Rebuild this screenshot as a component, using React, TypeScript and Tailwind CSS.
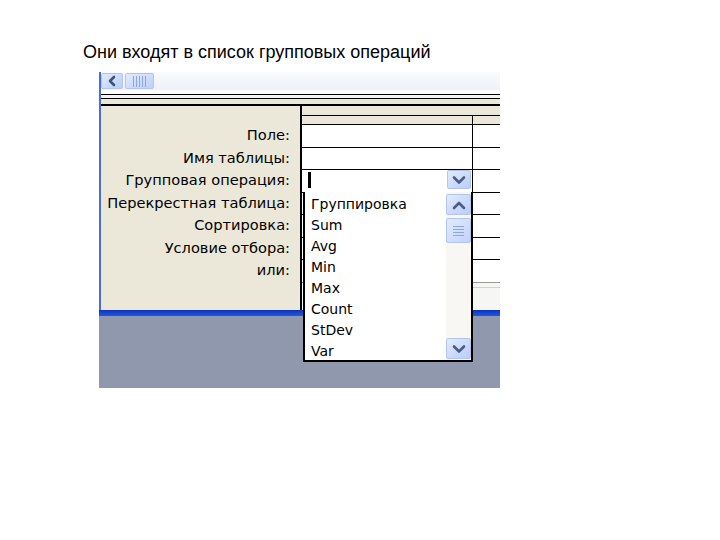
import React from "react";

const labels = [
  "Поле:",
  "Имя таблицы:",
  "Групповая операция:",
  "Перекрестная таблица:",
  "Сортировка:",
  "Условие отбора:",
  "или:",
];

const options = ["Группировка", "Sum", "Avg", "Min", "Max", "Count", "StDev", "Var"];

function Chevron({ up = false }: { up?: boolean }) {
  return (
    <svg width="14" height="10" viewBox="0 0 14 10">
      <path
        d={up ? "M2 8 L7 3 L12 8" : "M2 2.5 L7 7.5 L12 2.5"}
        fill="none"
        stroke="#4a5d86"
        strokeWidth="2.6"
        strokeLinecap="round"
        strokeLinejoin="round"
      />
    </svg>
  );
}

function ScrollButton({ up = false, className = "" }: { up?: boolean; className?: string }) {
  return (
    <div
      className={
        "flex items-center justify-center rounded-[2px] border border-[#b3c5ee] bg-gradient-to-br from-[#e2eafe] to-[#b9cdf8] " +
        className
      }
    >
      <Chevron up={up} />
    </div>
  );
}

export default function App() {
  return (
    <div className="w-[720px] h-[540px] bg-white font-['DejaVu_Sans',sans-serif] text-black">
      <div className="pt-[41px] pl-[83px] leading-[22px] text-[18px] font-['Liberation_Sans',Arial,sans-serif]">
        Они входят в список групповых операций
      </div>

      <div className="relative ml-[99px] mt-[9px] w-[401px] h-[316px] flex flex-col">
        {/* horizontal scrollbar */}
        <div className="h-[18px] flex items-stretch gap-[2px] border-l-2 border-[#4a6fd3] bg-gradient-to-b from-[#fafbfd] to-[#eef0f6] py-px">
          <div className="w-[22px] flex items-center justify-center rounded-[2px] border border-[#b3c5ee] bg-gradient-to-br from-[#e2eafe] to-[#b9cdf8]">
            <svg width="10" height="12" viewBox="0 0 10 12">
              <path d="M7 2 L3 6 L7 10" fill="none" stroke="#3f5278" strokeWidth="2.6" strokeLinecap="round" strokeLinejoin="round" />
            </svg>
          </div>
          <div className="w-[29px] flex items-center justify-center gap-[2px] rounded-[2px] border border-[#b3c5ee] bg-gradient-to-br from-[#e2eafe] to-[#bdd0f8]">
            <div className="w-px h-[11px] bg-[#8fa6d8]" />
            <div className="w-px h-[11px] bg-[#8fa6d8]" />
            <div className="w-px h-[11px] bg-[#8fa6d8]" />
            <div className="w-px h-[11px] bg-[#8fa6d8]" />
            <div className="w-px h-[11px] bg-[#8fa6d8]" />
          </div>
        </div>

        {/* splitter lines */}
        <div className="border-l-2 border-[#4a6fd3]">
          <div className="h-[4px] bg-white" />
          <div className="h-px bg-black" />
          <div className="h-[3px] bg-[#f7f6f1]" />
          <div className="h-px bg-black" />
          <div className="h-[5px] bg-[#ebe8d9]" />
          <div className="h-[2px] bg-black" />
        </div>

        {/* design grid */}
        <div className="h-[204px] flex border-l-2 border-[#4a6fd3] bg-[#ebe8d9]">
          <div className="w-[199px] pt-[18px] pr-[10px] text-right text-[14.6px]">
            {labels.map((l) => (
              <div key={l} className="h-[22.5px] leading-[22.5px] whitespace-nowrap">
                {l}
              </div>
            ))}
          </div>
          <div className="flex-1 flex flex-col border-l-2 border-black">
            <div className="h-[9px]" />
            <div className="h-[10px] flex border-y border-black">
              <div className="w-[171px] border-r border-black" />
            </div>
            {[0, 1, 2, 3, 4, 5].map((i) => (
              <div key={i} className="h-[22.5px] flex border-b border-black bg-white">
                <div className="w-[171px] relative border-r border-black">
                  {i === 2 && (
                    <>
                      <div className="absolute left-[6px] top-[2px] w-[3px] h-[16px] bg-black" />
                      <ScrollButton className="absolute right-[1px] top-[0px] w-[24px] h-[19px]" />
                    </>
                  )}
                </div>
                <div className="flex-1" />
              </div>
            ))}
            <div className="h-[22.5px] flex border-b border-[#9a9a9a] bg-white">
              <div className="w-[171px] border-r border-black" />
            </div>
            <div className="flex-1 flex bg-[#f6f6f4]">
              <div className="w-[171px] border-r border-black" />
              <div className="flex-1 mt-[4px] h-px bg-[#d2d2d2]" />
            </div>
          </div>
        </div>

        <div className="h-[6px] bg-gradient-to-b from-[#0a33c0] to-[#2456e0]" />
        <div className="flex-1 bg-[#8f98ac]" />

        {/* dropdown list */}
        <div className="absolute left-[204px] top-[120px] w-[170px] h-[170px] flex border-2 border-t-0 border-black bg-white">
          <div className="flex-1 pt-[1.5px] pl-[6px] text-[14px]">
            {options.map((o) => (
              <div key={o} className="h-[21px] leading-[21px] whitespace-nowrap">
                {o}
              </div>
            ))}
          </div>
          <div className="w-[25px] flex flex-col bg-[#f8f7f3] pt-[2px] pb-px">
            <ScrollButton up className="h-[21px]" />
            <div className="mt-[3px] h-[25px] flex flex-col items-center justify-center gap-[2px] rounded-[2px] border border-[#b3c5ee] bg-gradient-to-br from-[#e2eafe] to-[#c2d3f8]">
              <div className="w-[11px] h-px bg-[#8fa6d8]" />
              <div className="w-[11px] h-px bg-[#8fa6d8]" />
              <div className="w-[11px] h-px bg-[#8fa6d8]" />
              <div className="w-[11px] h-px bg-[#8fa6d8]" />
            </div>
            <div className="flex-1" />
            <ScrollButton className="h-[21px]" />
          </div>
        </div>
      </div>
    </div>
  );
}
